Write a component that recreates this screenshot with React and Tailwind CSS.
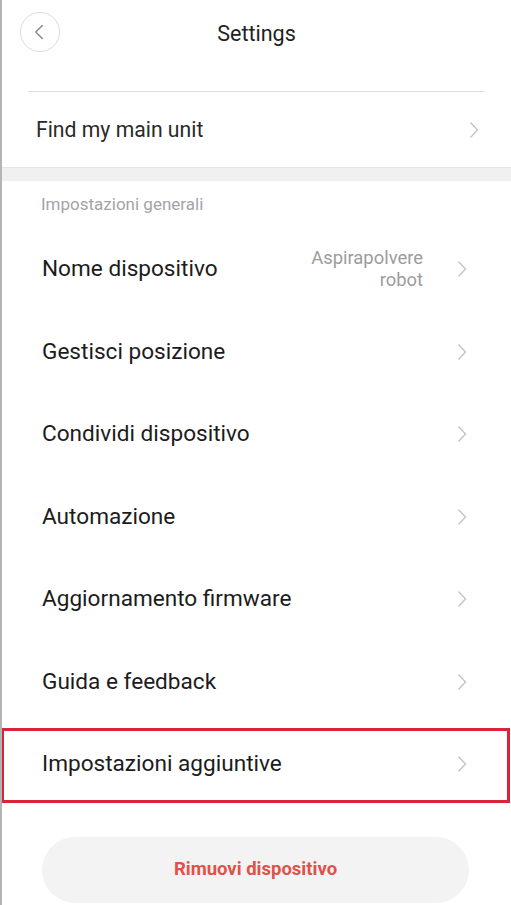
import { FiChevronLeft } from 'react-icons/fi'

function Chevron({ className = '' }) {
  return (
    <svg width="10" height="18" viewBox="0 0 10 18" className={className}>
      <path d="M1.5 1.5 L8.5 9 L1.5 16.5" fill="none" stroke="#c4c4c4" strokeWidth="1.4" />
    </svg>
  )
}

const rows = [
  { title: 'Nome dispositivo', value: ['Aspirapolvere', 'robot'] },
  { title: 'Gestisci posizione' },
  { title: 'Condividi dispositivo' },
  { title: 'Automazione' },
  { title: 'Aggiornamento firmware' },
  { title: 'Guida e feedback' },
]

export default function App() {
  return (
    <div
      className="w-[511px] h-[905px] overflow-hidden bg-white border-l-2 border-[#b4b4b4] flex flex-col"
      style={{ fontFamily: 'Roboto, "Noto Sans", sans-serif' }}
    >
      {/* HEADER */}
      <div className="h-[91px] flex items-start px-[18px] pt-[12px] relative">
        <button className="w-[40px] h-[40px] rounded-full border border-[#dcdcdc] flex items-center justify-center text-[#8a8a8a]">
          <FiChevronLeft size={26} strokeWidth={1.4} className="-ml-[2px]" />
        </button>
        <h1 className="absolute left-0 right-0 top-[18px] text-center text-[21.5px] text-[#222]">
          Settings
        </h1>
      </div>

      {/* FIND MY MAIN UNIT */}
      <div className="mx-[26px] border-t border-[#dedede]" />
      <div className="h-[75px] flex items-center justify-between pl-[34px] pr-[32px]">
        <span className="text-[21.2px] text-[#2a2a2a]">Find my main unit</span>
        <Chevron />
      </div>
      <div className="h-[14px] bg-[#f0f0f0] border-t border-[#e4e4e4]" />

      {/* GENERAL */}
      <div className="h-[47px] flex items-center pl-[39px]">
        <span className="text-[17px] text-[#a3a3a8]">Impostazioni generali</span>
      </div>

      {rows.map((row) => (
        <div
          key={row.title}
          className="h-[82.5px] shrink-0 flex items-center justify-between pl-[40px] pr-[44px]"
        >
          <span className="text-[22.6px] text-[#1c1c1c]">{row.title}</span>
          <div className="flex items-center gap-[34px]">
            {row.value && (
              <div className="text-right text-[18.4px] leading-[22px] text-[#9c9c9c]">
                {row.value.map((v) => (
                  <div key={v}>{v}</div>
                ))}
              </div>
            )}
            <Chevron />
          </div>
        </div>
      ))}

      {/* HIGHLIGHTED ROW */}
      <div className="h-[82.5px] shrink-0 relative flex items-center justify-between pl-[40px] pr-[44px]">
        <span className="text-[22.6px] text-[#1c1c1c]">Impostazioni aggiuntive</span>
        <Chevron />
        <div className="absolute left-[-1px] right-[1px] top-[5px] bottom-[3px] border-[3px] border-[#dc2436]" />
      </div>

      {/* REMOVE */}
      <div className="pt-[31px] px-[40px] pr-[40px]">
        <button className="w-[427px] h-[66px] rounded-full bg-[#f3f3f3] text-[#e0514a] text-[18.5px] font-bold">
          Rimuovi dispositivo
        </button>
      </div>
    </div>
  )
}
